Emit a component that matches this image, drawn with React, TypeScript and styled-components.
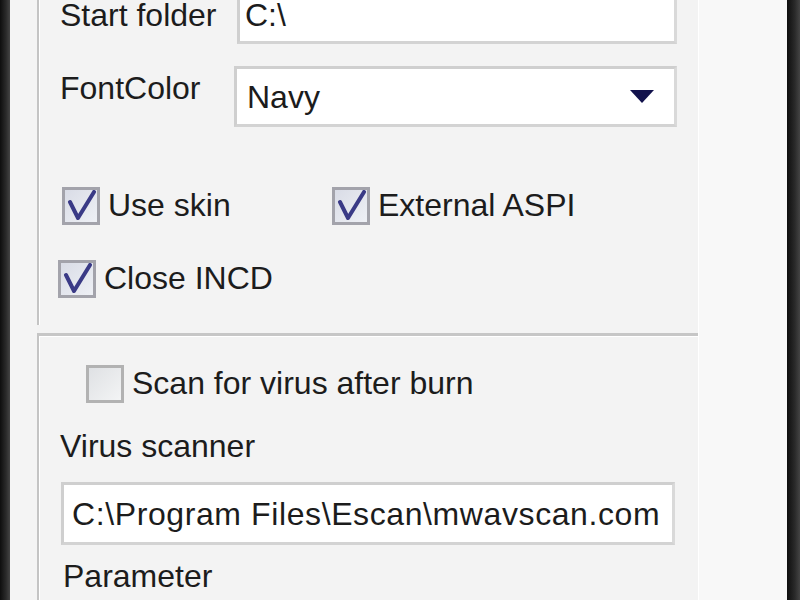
import React from "react";
import styled, { createGlobalStyle } from "styled-components";

const Global = createGlobalStyle`
  html, body { margin: 0; padding: 0; }
  body {
    width: 800px;
    height: 600px;
    overflow: hidden;
    background: #f3f3f3;
    font-family: "Liberation Sans", Arial, sans-serif;
  }
`;

const Screen = styled.div`
  display: flex;
  width: 800px;
  height: 600px;
  overflow: hidden;
  background: #f3f3f3;
  color: #1c1c1c;
  font-size: 32px;
`;

const EdgeBar = styled.div<{ $w: number }>`
  width: ${(p) => p.$w}px;
  flex: none;
  background: linear-gradient(90deg, #0e0e0e, #2a2a2a 60%, #444);
`;

const Gutter = styled.div<{ $w: number; $bg?: string }>`
  width: ${(p) => p.$w}px;
  flex: none;
  background: ${(p) => p.$bg || "#f4f4f4"};
`;

const Main = styled.div`
  width: 661px;
  flex: none;
  display: flex;
  flex-direction: column;
`;

const RightArea = styled.div`
  flex: 1;
  background: #f8f8f8;
  border-left: 1px solid #ffffff;
`;

const UpperPanel = styled.div`
  height: 325px;
  flex: none;
  border-left: 2px solid #c4c4c4;
  box-shadow: inset 1px 0 0 #ffffff;
  display: flex;
  flex-direction: column;
  padding-left: 21px;
`;

const LowerPanel = styled.div`
  margin-top: 8px;
  flex: 1;
  border-left: 2px solid #c4c4c4;
  border-top: 3px solid #c6c6c6;
  box-shadow: inset 1px 1px 0 #ffffff;
  display: flex;
  flex-direction: column;
  padding-left: 21px;
`;

const FieldRow = styled.div<{ $top: number; $h: number }>`
  display: grid;
  grid-template-columns: 174px 1fr;
  align-items: center;
  margin-top: ${(p) => p.$top}px;
  height: ${(p) => p.$h}px;
  width: 617px;
`;

const Label = styled.div<{ $dy?: number }>`
  white-space: nowrap;
  line-height: 1;
  transform: translateY(${(p) => p.$dy || 0}px);
`;

const TextBox = styled.div<{ $shift?: number; $pad?: number; $dy?: number }>`
  height: 100%;
  box-sizing: border-box;
  background: #ffffff;
  border: 3px solid #cfcfcf;
  border-right-color: #d9d9d9;
  border-bottom-color: #d3d3d3;
  display: flex;
  align-items: center;
  padding-left: ${(p) => p.$pad ?? 5}px;
  padding-top: ${(p) => (p.$dy || 0) * 2}px;
  margin-left: ${(p) => p.$shift || 0}px;
  white-space: nowrap;
  overflow: hidden;
  line-height: 1;
`;

const Combo = styled(TextBox)`
  justify-content: space-between;
  padding-right: 20px;
`;

const Arrow = styled.div`
  width: 0;
  height: 0;
  border-left: 12px solid transparent;
  border-right: 12px solid transparent;
  border-top: 13px solid #12124c;
`;

const CheckGrid = styled.div`
  margin-top: 60px;
  display: grid;
  grid-template-columns: 271px auto;
  row-gap: 35px;
  padding-left: 1px;
`;

const CheckItem = styled.div<{ $indent?: number; $top?: number }>`
  display: flex;
  align-items: center;
  gap: 8px;
  height: 38px;
  margin-left: ${(p) => p.$indent || 0}px;
  margin-top: ${(p) => p.$top || 0}px;
  white-space: nowrap;
`;

const Box = styled.div<{ $checked?: boolean }>`
  width: 38px;
  height: 38px;
  flex: none;
  box-sizing: border-box;
  border: 3px solid ${(p) => (p.$checked ? "#a3a3ab" : "#b2b2b2")};
  background: ${(p) =>
    p.$checked
      ? "linear-gradient(135deg, #d9dce6, #eef0f5)"
      : "linear-gradient(135deg, #dfe1e4, #f3f4f5)"};
  display: flex;
  align-items: center;
  justify-content: center;
`;

const CheckText = styled.span`
  line-height: 1;
  transform: translateY(-1px);
`;

const Check = () => (
  <svg width="32" height="32" viewBox="0 0 32 32">
    <path
      d="M5 12 L13 28 L29 2"
      fill="none"
      stroke="#3a3a86"
      strokeWidth="4"
      strokeLinejoin="round"
      strokeLinecap="round"
    />
  </svg>
);

const CheckBox = ({
  label,
  checked,
  indent,
  top,
}: {
  label: string;
  checked?: boolean;
  indent?: number;
  top?: number;
}) => (
  <CheckItem $indent={indent} $top={top}>
    <Box $checked={checked}>{checked && <Check />}</Box>
    <CheckText>{label}</CheckText>
  </CheckItem>
);

const BlockLabel = styled.div<{ $top: number; $left?: number }>`
  margin-top: ${(p) => p.$top}px;
  margin-left: ${(p) => p.$left || 0}px;
  line-height: 1;
  white-space: nowrap;
`;

const WideBox = styled(TextBox)`
  height: 63px;
  width: 614px;
  margin-left: 1px;
  margin-top: 20px;
  padding-left: 8px;
  flex: none;
  letter-spacing: 0.6px;
`;

export default function App() {
  return (
    <>
      <Global />
      <Screen>
        <EdgeBar $w={10} />
        <Gutter $w={27} />
        <Main>
          <UpperPanel>
            <FieldRow $top={-18} $h={62}>
              <Label $dy={2}>Start folder</Label>
              <TextBox $shift={3} $pad={5} $dy={2}>
                C:\
              </TextBox>
            </FieldRow>
            <FieldRow $top={22} $h={61}>
              <Label $dy={-9}>FontColor</Label>
              <Combo $pad={10}>
                <span>Navy</span>
                <Arrow />
              </Combo>
            </FieldRow>
            <CheckGrid>
              <CheckBox label="Use skin" checked indent={1} />
              <CheckBox label="External ASPI" checked />
              <CheckBox label="Close INCD" checked indent={-3} />
            </CheckGrid>
          </UpperPanel>
          <LowerPanel>
            <CheckBox label="Scan for virus after burn" indent={26} top={29} />
            <BlockLabel $top={27}>Virus scanner</BlockLabel>
            <WideBox>C:\Program Files\Escan\mwavscan.com</WideBox>
            <BlockLabel $top={15} $left={3}>Parameter</BlockLabel>
          </LowerPanel>
        </Main>
        <RightArea />
        <EdgeBar $w={13} />
      </Screen>
    </>
  );
}
